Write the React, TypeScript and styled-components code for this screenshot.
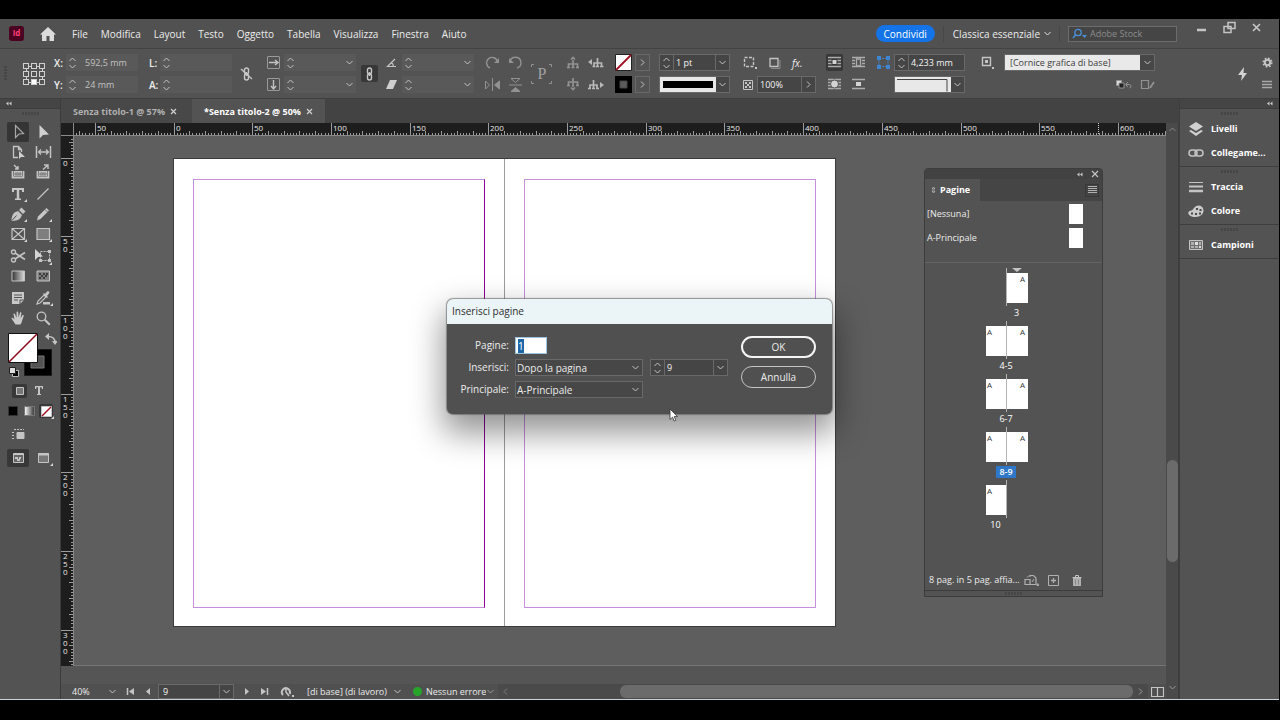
import React, { useEffect, useLayoutEffect, useRef, useState } from "react";
import styled, { createGlobalStyle, css } from "styled-components";

const Global = createGlobalStyle`
  * { box-sizing: border-box; }
  body { margin: 0; background: #000; color: #ececec; font: 10px/12px "Open Sans", "Noto Sans", sans-serif; }
  button, input, select { font: inherit; color: inherit; margin: 0; padding: 0; border: 0; background: none; outline: none; min-width: 0; }
  button { display: flex; align-items: center; justify-content: center; cursor: default; }
  select { appearance: none; }
  svg { display: block; flex: none; }
  h2 { margin: 0; font: inherit; }
`;

/* ---------- drawings ---------- */

const Svg = ({ w = 14, h = 14, children, c = "#c4c4c4" }: { w?: number; h?: number; c?: string; children: React.ReactNode }) => (
  <svg width={w} height={h} viewBox={`0 0 ${w} ${h}`} fill="none" stroke={c} aria-hidden="true">{children}</svg>
);

const Caret = ({ dir = "down", c = "#c4c4c4" }: { dir?: "down" | "up" | "left" | "right"; c?: string }) => {
  const d = { down: "M1.5 3l3 3 3-3", up: "M1.5 6l3-3 3 3", left: "M6 1.5l-3 3 3 3", right: "M3 1.5l3 3-3 3" }[dir];
  return <Svg w={9} h={9} c={c}><path d={d} /></Svg>;
};

const Collapse = () => <Svg w={6} h={5}><path d="M2.500 .5v4L0 2.500zM5.500 .5v4L3 2.500z" fill="#c8c8c8" stroke="none" /></Svg>;

const Corner = ({ x = 15, y = 13 }) => <path d={`M${x} ${y - 3}v3h-3z`} fill="#d8d8d8" stroke="none" />;

const toolIcons: [string, React.ReactNode][][] = [
  [
    ["Selezione", <path d="M5.500 1.500v12l3.500-3.500 4.500-.5z" stroke="#a8a8a8" strokeWidth="1.200" />],
    ["Selezione diretta", <path d="M4.500 1v13.500L8 11l6-.5z" fill="#d0d0d0" stroke="none" />],
    ["Pagina", <><path d="M8 13.500H3.500v-11h5l3 3V8M8.500 2.500v3h3" strokeWidth="1.300" /><path d="M9 7v8l2-2h4z" fill="#d0d0d0" stroke="none" /></>],
    ["Spazio", <><path d="M1.500 2v12M15.500 2v12" strokeWidth="1.500" /><path d="M4 8h9M6 5.500L3.500 8 6 10.500M11 5.500L13.500 8 11 10.500" strokeWidth="1.300" /></>],
    ["Raccolta contenuti", <><path d="M2.500 7v6.500h11V7" strokeWidth="1.800" /><path d="M4 7h8v5H4z" fill="#c4c4c4" stroke="none" /><path d="M6 8v4M8 8v4M10 8v4M4 10h8" stroke="#535353" strokeWidth=".6" /><path d="M4 1l3.500 3.500M8 2v3H5" strokeWidth="1.400" /></>],
    ["Posizionamento contenuti", <><path d="M2.500 7v6.500h11V7" strokeWidth="1.800" /><path d="M4 7h8v5H4z" fill="#c4c4c4" stroke="none" /><path d="M6 8v4M8 8v4M10 8v4M4 10h8" stroke="#535353" strokeWidth=".6" /><path d="M8 5.500l4.500-4M9 1h4v4" strokeWidth="1.400" /></>],
  ],
  [
    ["Testo", <><path d="M2 2h12v4h-2V4H9.200v8.500H11V14H5v-1.500h1.800V4H4v2H2z" fill="#c8c8c8" stroke="none" /><Corner x={17} y={16} /></>],
    ["Linea", <path d="M2.500 13.500l11-11" strokeWidth="1.300" />],
    ["Penna", <><path d="M1.500 15c0-4 1-7 3-8.500L8 5l4 4-1.500 3C9 14 6 15 1.500 15zM9 4l2.500-2.500 4 4L13 8z" fill="#c4c4c4" stroke="none" /><path d="M2 14.500l4.500-5" stroke="#535353" /><Corner x={17} y={16} /></>],
    ["Matita", <><path d="M2 14.500l1-4L11.500 2 14 4.500 5.500 13z" fill="#c8c8c8" stroke="none" /><path d="M10 3.500L12.500 6" stroke="#535353" strokeWidth=".8" /><Corner x={17} y={16} /></>],
    ["Cornice rettangolare", <><path d="M2 2.500h12.500v11H2zM2 2.500l12.500 11M14.500 2.500L2 13.500" strokeWidth="1.200" /><Corner x={17} y={16} /></>],
    ["Rettangolo", <><path d="M2 2.500h12.500v11H2z" fill="#7e7e7e" strokeWidth="1.200" /><Corner x={17} y={16} /></>],
  ],
  [
    ["Forbici", <><circle cx="3.500" cy="4" r="2" strokeWidth="1.400" /><circle cx="3.500" cy="12" r="2" strokeWidth="1.400" /><path d="M5 5l10 6.500M5 11l10-6.500" strokeWidth="1.700" /></>],
    ["Trasformazione libera", <><path d="M5.500 3.500h9v9h-9z" strokeDasharray="2 1" /><path d="M13 2h3v3h-3zM13 11h3v3h-3zM4 11h3v3H4z" fill="#c4c4c4" stroke="none" /><path d="M0 1v11l3-3 5-.500z" fill="#d4d4d4" stroke="none" /><Corner x={17} y={17} /></>],
    ["Sfumatura", <><defs><linearGradient id="gt"><stop stopColor="#333" /><stop offset="1" stopColor="#ddd" /></linearGradient></defs><path d="M2 3h12.500v10H2z" fill="url(#gt)" /></>],
    ["Sfumatura con trasparenza", <><path d="M2 3h12.500v10H2z" fill="#808080" /><path d="M4 5h2v2H4zM8 5h2v2H8zM11 5h2v2h-2zM6 7h2v2H6zM10 7h2v2h-2zM4 9h2v2H4zM8 9h2v2H8z" fill="#3c3c3c" stroke="none" /></>],
  ],
  [
    ["Nota", <><path d="M2 2h12v8l-4 4H2z" fill="#c8c8c8" stroke="none" /><path d="M4 5h8M4 7.500h8M4 10h4" stroke="#535353" /><path d="M10 14v-4h4" stroke="#535353" /></>],
    ["Contagocce", <><path d="M2 14l1-3 6-6 2 2-6 6z" strokeWidth="1.200" /><path d="M8 4l1-1 1 1 2-2.500c2-1 3 .5 2 2L12 6l1 1-1 1z" fill="#c8c8c8" stroke="none" /><path d="M8 12h7v2.500H8z" fill="#c4c4c4" stroke="none" /><Corner x={18} y={16} /></>],
    ["Mano", <path d="M5.500 14.500C4 12 2.500 10 1.500 8.200c.8-.8 1.500-.4 3 1.200L3.500 4c.8-.8 1.400-.4 1.700.4L6.500 8 6.600 2c.8-.8 1.500-.4 1.600.4L8.600 7.600 10 2.500c1-.5 1.500 0 1.400.9l-.8 4.800 2-3.200c1-.3 1.400.2 1.100 1L12 11c-.5 2-1 2.500-1.500 3.500z" fill="#cacaca" stroke="none" />],
    ["Zoom", <><circle cx="6.500" cy="6.500" r="4.300" strokeWidth="1.300" /><path d="M9.800 9.800l5 5" strokeWidth="2" /></>],
  ],
];

const Grip = styled.i<{ $vertical?: boolean }>`
  display: block;
  width: ${(p) => (p.$vertical ? 3 : 17)}px;
  height: ${(p) => (p.$vertical ? 15 : 3)}px;
  margin: ${(p) => (p.$vertical ? "0" : "0 auto")};
  background: repeating-linear-gradient(${(p) => (p.$vertical ? "180deg" : "90deg")}, #464646 0 2px, transparent 2px 3px);
`;

/* ---------- window ---------- */

const Window = styled.div`
  min-height: 100vh;
  border: solid #000;
  border-width: 19px 1px 20px 0;
  display: flex;
  flex-direction: column;
  background: #535353;
`;

const MenuBar = styled.header`
  display: flex;
  align-items: center;
  height: 30px;
  padding: 0 16px 0 9px;
  border-bottom: 1px solid #434343;
  background: #515151;
`;

const Logo = styled.span`
  width: 15px;
  height: 15px;
  border-radius: 3px;
  background: #4a0220;
  color: #ff3f78;
  font-weight: 700;
  font-size: 8px;
  line-height: 14px;
  text-align: center;
`;

const HomeButton = styled.button` margin: 0 16px; `;

const Menus = styled.nav`
  display: flex;
  gap: 13px;
  margin-right: auto;
`;

const MenuItem = styled.button`
  line-height: 16px;
  white-space: nowrap;
`;

const Share = styled.button`
  height: 17px;
  padding: 0 8px;
  border-radius: 9px;
  background: #1473e6;
  color: #fff;
`;

const Workspace = styled.button`
  gap: 3px;
  height: 16px;
  margin-left: 8px;
  padding: 0 7px 0 9px;
  border: solid #474747;
  border-width: 0 1px;
  white-space: nowrap;
`;

const Search = styled.label`
  display: flex;
  align-items: center;
  gap: 3px;
  width: 109px;
  height: 16px;
  margin-left: 8px;
  padding-left: 3px;
  border: 1px solid #6c6c6c;
  background: #454545;
  input { width: 80px; font-size: 9px; }
  input::placeholder { color: #8c8c8c; opacity: 1; }
`;

const WindowButtons = styled.div`
  display: flex;
  align-self: flex-start;
  gap: 13px;
  margin: 2px 0 0 18px;
  button { width: 14px; height: 14px; }
`;

/* ---------- control bar ---------- */

const ControlBar = styled.section`
  display: flex;
  align-items: center;
  height: 50px;
  padding-left: 4px;
  border-bottom: 1px solid #3e3e3e;
`;

const Cell = styled.div<{ $w: number; $start?: boolean }>`
  flex: none;
  width: ${(p) => p.$w}px;
  display: flex;
  flex-direction: column;
  align-items: ${(p) => (p.$start ? "flex-start" : "stretch")};
  gap: 5px;
`;

const Line = styled.div<{ $gap?: number }>`
  display: flex;
  align-items: center;
  gap: ${(p) => p.$gap ?? 0}px;
  height: 17px;
  label { font-weight: 600; }
`;

const Spacer = styled.div` flex: 1; `;

const Field = styled.div<{ $w: number; $live?: boolean }>`
  display: flex;
  width: ${(p) => p.$w}px;
  height: 17px;
  background: #595959;
  color: #c2c2c2;
  input { flex: 1; padding-left: 6px; font-size: 9px; width: 0; }
  ${(p) => p.$live && css`
    background: #454545;
    border: 1px solid #696969;
    color: #f4f4f4;
    div + input, input + button { border-left: 1px solid #696969; }
    input { padding-left: 2px; }
  `}
`;

const Steps = styled.div`
  display: flex;
  flex-direction: column;
  justify-content: center;
  width: 13px;
  flex: none;
  button { height: 7px; overflow: hidden; }
`;

const SideButton = styled.button` flex: none; width: 14px; `;

const Stepper = ({ name }: { name: string }) => (
  <Steps>
    <button type="button" aria-label={`Aumenta ${name}`}><Caret dir="up" /></button>
    <button type="button" aria-label={`Riduci ${name}`}><Caret /></button>
  </Steps>
);

const NumberField = ({ id, name, value = "", w = 72, live, drop }: { id: string; name: string; value?: string; w?: number; live?: boolean; drop?: boolean }) => (
  <Field $w={w} $live={live}>
    <Stepper name={name} />
    <input id={id} aria-label={name} defaultValue={value} />
    {drop && <SideButton type="button" aria-label={`Elenco ${name}`}><Caret /></SideButton>}
  </Field>
);

const Tile = styled.button<{ $on?: boolean }>`
  width: 17px;
  height: 17px;
  border-radius: 2px;
  background: ${(p) => (p.$on ? "#383838" : "none")};
`;

const Bare = styled.button` height: 17px; `;

const ArrowBox = styled.button`
  width: 15px;
  height: 17px;
  border: 1px solid #696969;
`;

const SelectBox = styled.div<{ $w: number; $light?: boolean }>`
  position: relative;
  display: flex;
  width: ${(p) => p.$w}px;
  height: 17px;
  border: 1px solid #696969;
  background: #474747;
  select {
    flex: 1;
    padding: 0 16px 0 ${(p) => (p.$light ? 5 : 1)}px;
    ${(p) => p.$light && css`
      background: linear-gradient(#e9e9e9 0 0) 0 0 / calc(100% - 14px) 100% no-repeat;
      color: #3c3c3c;
      font-size: 9px;
    `}
  }
  svg { position: absolute; right: 2px; top: 3px; pointer-events: none; }
`;

const Dropdown = ({ id, name, value, w, light }: { id: string; name: string; value: string; w: number; light?: boolean }) => (
  <SelectBox $w={w} $light={light}>
    <select id={id} aria-label={name}><option>{value}</option></select>
    <Caret />
  </SelectBox>
);

const Preview = styled.div<{ $w: number }>`
  display: flex;
  width: ${(p) => p.$w}px;
  height: 17px;
  border: 1px solid #696969;
  background: #e8e8e8;
  svg { flex: none; }
  button { flex: 1; background: #474747; }
`;

const dim = "#929292";

const WrapIcon = ({ kind }: { kind: number }) => (
  <Svg w={13} h={13} c="#acacac">
    <path d={["M0 1.500h13M0 4.500h13M0 7.500h13M0 10.500h13", "M0 1.500h13M0 4.500h3M10 4.500h3M0 7.500h3M10 7.500h3M0 10.500h13", "M0 1.500h13M0 4.500h13M0 7.500h13M0 10.500h13", "M0 1.500h13M0 10.500h13"][kind]} strokeWidth="1.300" />
    {kind === 0 && <path d="M4 3.500h5v5H4z" fill="#d4d4d4" stroke="#383838" />}
    {kind === 1 && <path d="M4.500 3h4v7h-4z" strokeWidth="1.300" />}
    {kind === 2 && <circle cx="6.500" cy="6" r="4" fill="#d4d4d4" stroke="#535353" />}
    {kind === 3 && <path d="M4 4h5v4H4z" fill="#d4d4d4" stroke="none" />}
  </Svg>
);

const TreeIcon = ({ kind }: { kind: number }) => (
  <Svg w={16} h={13} c={kind % 2 ? "#b8b8b8" : dim}>
    {kind === 0 && <path d="M7 4v7M2.500 11V8h9v3M1 11.500h3M5.500 11.500h3M10 11.500h3M5 3.500l2-2 2 2" strokeWidth="1.700" />}
    {kind === 1 && <><path d="M9.500 2v9M6 10V7h7.500v3M4.500 10.500h3M8 10.500h3M12 10.500h3.500" strokeWidth="1.700" /><path d="M0 6l4-3v6z" fill="#b8b8b8" stroke="none" /></>}
    {kind === 2 && <path d="M7 0v9M2.500 7V4h9v3M1 7.500h3M10 7.500h3M5 9.500l2 2 2-2" strokeWidth="1.700" />}
    {kind === 3 && <><path d="M5.500 2v9M2 10V7h7v3M0 10.500h3M4 10.500h3M8 10.500h3" strokeWidth="1.700" /><path d="M16 7l-4-3v6z" fill="#b8b8b8" stroke="none" /></>}
  </Svg>
);

const ChainLink = ({ broken }: { broken?: boolean }) => (
  <Svg w={13} h={14} c="#c8c8c8">
    <rect x="4.500" y="1" width="4" height="6" rx="2" strokeWidth="1.400" />
    <rect x="4.500" y="7" width="4" height="6" rx="2" strokeWidth="1.400" />
    <path d="M6.500 5v4" strokeWidth="1.400" />
    {broken && <path d="M1 2l11 10" strokeWidth="1.300" />}
  </Svg>
);

function Controls() {
  return (
    <ControlBar aria-label="Controllo">
      <Cell $w={19}><Grip $vertical /></Cell>
      <Cell $w={31}>
        <Svg w={22} h={22} c="#d0d0d0">
          {[0, 8, 16].flatMap((y) => [0, 8, 16].map((x) => (
            <rect key={`${x}-${y}`} x={x + 0.5} y={y + 0.5} width="5" height="5" fill={x === 8 && y === 16 ? "#fff" : "none"} />
          )))}
          <path d="M6 3.500h2M14 3.500h2M6 19.500h2M14 19.500h2M3.500 6v2M3.500 14v2M19.500 6v2M19.500 14v2" />
        </Svg>
      </Cell>
      <Cell $w={12}><Line><label htmlFor="x">X:</label></Line><Line><label htmlFor="y">Y:</label></Line></Cell>
      <Cell $w={83}><NumberField id="x" name="X" value="592,5 mm" /><NumberField id="y" name="Y" value="24 mm" /></Cell>
      <Cell $w={11}><Line><label htmlFor="l">L:</label></Line><Line><label htmlFor="a">A:</label></Line></Cell>
      <Cell $w={80}><NumberField id="l" name="L" /><NumberField id="a" name="A" /></Cell>
      <Cell $w={27}><Line><Bare aria-label="Vincola proporzioni"><ChainLink broken /></Bare></Line></Cell>
      <Cell $w={17}>
        <Line><Svg w={13} h={13}><path d="M.5 1v11M12.500 1v11M.5.5h12M.5 12.500h12" stroke="#9a9a9a" /><path d="M2 6.500h8M8 4l3 2.500L8 9" strokeWidth="1.400" /></Svg></Line>
        <Line><Svg w={13} h={13}><path d="M.5 1v11M12.500 1v11M.5.5h12M.5 12.500h12" stroke="#9a9a9a" /><path d="M6.500 2v8M4 8l2.500 3L9 8" strokeWidth="1.400" /></Svg></Line>
      </Cell>
      <Cell $w={77}><NumberField id="sx" name="Scala X" drop /><NumberField id="sy" name="Scala Y" drop /></Cell>
      <Cell $w={25}><Line><Tile $on aria-label="Vincola scala"><ChainLink /></Tile></Line></Cell>
      <Cell $w={16}>
        <Line><Svg w={11} h={11}><path d="M9 2L1.500 9.500H10M5 5.500c2 1 2.500 2 2.500 4" strokeWidth="1.200" /></Svg></Line>
        <Line><Svg w={11} h={11}><path d="M4 1h7L7 10H0z" fill="#cfcfcf" stroke="none" /></Svg></Line>
      </Cell>
      <Cell $w={83}><NumberField id="rot" name="Rotazione" drop /><NumberField id="incl" name="Inclinazione" drop /></Cell>
      <Cell $w={23}>
        <Line><Bare aria-label="Ruota in senso orario"><Svg w={15} h={14} c={dim}><path d="M5 12A5.500 5.500 0 1 1 12.500 6" strokeWidth="1.400" /><path d="M14 2v5H9z" fill={dim} stroke="none" /></Svg></Bare></Line>
        <Line><Bare aria-label="Rifletti orizzontalmente"><Svg w={15} h={13} c={dim}><path d="M.5 3v8l4-4zM7.500 0v13" /><path d="M14.500 3v8l-5-4z" fill={dim} /></Svg></Bare></Line>
      </Cell>
      <Cell $w={23}>
        <Line><Bare aria-label="Ruota in senso antiorario"><Svg w={15} h={14} c={dim}><path d="M9 12A5.500 5.500 0 1 0 2 6" strokeWidth="1.400" /><path d="M1 2v5h5z" fill={dim} stroke="none" /></Svg></Bare></Line>
        <Line><Bare aria-label="Rifletti verticalmente"><Svg w={15} h={14} c={dim}><path d="M3 .5h9l-4.500 4zM1 7h13" /><path d="M3 13.500h9l-4.500-4z" fill={dim} /></Svg></Bare></Line>
      </Cell>
      <Cell $w={35}>
        <Svg w={22} h={22} c={dim}>
          <path d="M.5 4V1.500H3M18 1.500h2.500V4M.5 18v2.500H3M18 20.500h2.500V18" />
          <text x="11" y="16" textAnchor="middle" fill="#a2a2a2" stroke="none" fontSize="16" fontFamily="Liberation Serif, serif">P</text>
        </Svg>
      </Cell>
      <Cell $w={22}><Line><TreeIcon kind={0} /></Line><Line><TreeIcon kind={2} /></Line></Cell>
      <Cell $w={27}><Line><TreeIcon kind={1} /></Line><Line><TreeIcon kind={3} /></Line></Cell>
      <Cell $w={20}>
        <Line><Bare aria-label="Riempimento"><Svg w={17} h={17}><path d="M.5.5h16v16H.5z" fill="#fff" stroke="#222" /><path d="M1 16L16 1" stroke="#a01020" strokeWidth="1.800" /></Svg></Bare></Line>
        <Line><Bare aria-label="Traccia"><Svg w={17} h={17}><path d="M0 0h17v17H0z" fill="#000" stroke="none" /><path d="M5 5h7v7H5z" fill="#5c5c5c" stroke="#444" /></Svg></Bare></Line>
      </Cell>
      <Cell $w={24}>
        <ArrowBox aria-label="Opzioni riempimento"><Caret dir="right" /></ArrowBox>
        <ArrowBox aria-label="Opzioni traccia"><Caret dir="right" /></ArrowBox>
      </Cell>
      <Cell $w={84}>
        <NumberField id="weight" name="Spessore" value="1 pt" w={71} live drop />
        <Preview $w={71}>
          <Svg w={56} h={15}><path d="M3 4h50v7H3z" fill="#000" stroke="none" /></Svg>
          <button aria-label="Tipo di traccia"><Caret /></button>
        </Preview>
      </Cell>
      <Cell $w={83}>
        <Line $gap={11}>
          <Bare aria-label="Angoli"><Svg><path d="M1.500 1.500h9v9h-9z" strokeDasharray="3 1.500" strokeWidth="1.400" /><path d="M12 11h2v2h-2z" fill="#c4c4c4" stroke="none" /></Svg></Bare>
          <Bare aria-label="Ombra"><Svg w={13}><path d="M2 2.500h8v8H2z" strokeWidth="1.300" /><path d="M3 12.500h9V4" stroke="#8a8a8a" /></Svg></Bare>
          <Bare aria-label="Effetti"><i>fx.</i></Bare>
        </Line>
        <Line $gap={4}>
          <Svg w={10} h={10}><path d="M.5.5h9v9h-9z" /><path d="M2 2h2v2H2zM6 2h2v2H6zM4 4h2v2H4zM2 6h2v2H2zM6 6h2v2H6z" fill="#c4c4c4" stroke="none" /></Svg>
          <Field $w={59} $live>
            <input aria-label="Opacità" defaultValue="100%" />
            <SideButton aria-label="Regola opacità"><Caret dir="right" /></SideButton>
          </Field>
        </Line>
      </Cell>
      <Cell $w={24}><Tile $on aria-label="Nessun contorno"><WrapIcon kind={0} /></Tile><Tile aria-label="Contorno forma"><WrapIcon kind={2} /></Tile></Cell>
      <Cell $w={27}><Tile aria-label="Contorno riquadro"><WrapIcon kind={1} /></Tile><Tile aria-label="Salta oggetto"><WrapIcon kind={3} /></Tile></Cell>
      <Cell $w={17}>
        <Line><Svg w={13} h={13} c="#3f86d2"><path d="M2 2.500h9v8H2z" strokeDasharray="2 1" /><path d="M0 0h4v4H0zM9 0h4v4H9zM0 9h4v4H0zM9 9h4v4H9z" fill="#3f86d2" stroke="none" /></Svg></Line>
        <Line />
      </Cell>
      <Cell $w={87}>
        <NumberField id="corner" name="Dimensione angolo" value="4,233 mm" w={71} live />
        <Preview $w={71}>
          <Svg w={56} h={15} c="#444"><path d="M2 2.500h50v12" /></Svg>
          <button aria-label="Forma angolo"><Caret /></button>
        </Preview>
      </Cell>
      <Cell $w={23}><Line><Svg w={13} h={13}><path d="M1.500 1.500h8v8h-8z" strokeWidth="1.400" /><path d="M4 4h3v3H4zM11 11h2v2h-2z" fill="#c4c4c4" stroke="none" /></Svg></Line><Line /></Cell>
      <Cell $w={151}>
        <Dropdown id="style" name="Stile oggetto" value="[Cornice grafica di base]" w={151} light />
        <Line $gap={8}>
          <Spacer />
          <Bare aria-label="Cancella modifiche"><Svg w={17} h={12} c={dim}><path d="M1.500 1.500h5v5h-5z" fill="#ddd" /><path d="M4 4h5v5H4z" fill="#222" /><path d="M11 5.500h3.500c2 0 2 3.500 0 3.500M13 3l-2.500 2.500L13 8" /></Svg></Bare>
          <Bare aria-label="Stile rapido"><Svg w={15} h={12} c={dim}><path d="M1.500 1.500h7v8h-7z" strokeWidth="1.200" /><path d="M10 9l4-6" strokeWidth="1.800" /></Svg></Bare>
        </Line>
      </Cell>
      <Spacer />
      <Cell $w={24}><Line><Bare aria-label="Azioni rapide"><Svg w={10} h={14}><path d="M6 0L0 8h4l-1 6 6-8H5.500z" fill="#d4d4d4" stroke="none" /></Svg></Bare></Line></Cell>
      <Cell $w={17} $start>
        <Bare aria-label="Personalizza"><Svg w={11} h={11}><circle cx="5.500" cy="5.500" r="2.700" strokeWidth="2" /><circle cx="5.500" cy="5.500" r="4.300" strokeDasharray="1.700 1.677" strokeWidth="1.600" /></Svg></Bare>
        <Bare aria-label="Menu"><Svg w={10} h={9} c="#a8a8a8"><path d="M0 1.500h10M0 4.500h10M0 7.500h10" strokeWidth="1.400" /></Svg></Bare>
      </Cell>
    </ControlBar>
  );
}

/* ---------- tool bar ---------- */

const Main = styled.main`
  flex: 1;
  display: grid;
  grid-template-columns: 61px minmax(0, 1fr) 100px;
  border-bottom: 1px solid #c9d2d6;
`;

const Tools = styled.aside`
  display: flex;
  flex-direction: column;
  border-right: 1px solid #3c3c3c;
`;

const DockHead = styled.div<{ $right?: boolean }>`
  display: flex;
  align-items: center;
  justify-content: ${(p) => (p.$right ? "flex-end" : "flex-start")};
  height: 10px;
  padding: 0 6px;
  background: #454545;
  border-bottom: 1px solid #3e3e3e;
  margin-bottom: ${(p) => (p.$right ? 0 : 3)}px;
`;

const ToolGroup = styled.div`
  display: grid;
  grid-template-columns: 22px 22px;
  column-gap: 3px;
  margin: 0 0 2px 7px;
`;

const Tool = styled.button<{ $on?: boolean }>`
  height: 20px;
  border-radius: 2px;
  background: ${(p) => (p.$on ? "#353535" : "none")};
  svg { overflow: visible; }
`;

const ToolsTop = styled.div` padding-bottom: 7px; `;

const Swatches = styled.button` margin: 2px 0 0 7px; align-self: flex-start; `;

const ModeRow = styled.div<{ $h: number; $gap: number }>`
  display: flex;
  align-items: center;
  gap: ${(p) => p.$gap}px;
  height: ${(p) => p.$h}px;
  padding-left: 7px;
`;

const ModeButton = styled.button<{ $w: number; $on?: boolean }>`
  width: ${(p) => p.$w}px;
  height: ${(p) => (p.$w === 22 ? 18 : 14)}px;
  border-radius: 2px;
  background: ${(p) => (p.$on ? "#383838" : "none")};
  svg { overflow: visible; }
`;

function ToolBar() {
  return (
    <Tools aria-label="Strumenti">
      <DockHead><Collapse /></DockHead>
      <ToolsTop><Grip /></ToolsTop>
      {toolIcons.map((group, g) => (
        <ToolGroup key={g}>
          {group.map(([name, art], i) => (
            <Tool key={name} $on={g === 0 && i === 0} aria-label={name}><Svg w={16} h={16}>{art}</Svg></Tool>
          ))}
        </ToolGroup>
      ))}
      <Swatches aria-label="Riempimento e traccia">
        <Svg w={50} h={46}>
          <path d="M17.500 17.500h27v26h-27z" fill="#000" stroke="#1a1a1a" />
          <path d="M24 24h13v12H24z" fill="#535353" stroke="#777" />
          <path d="M1.500 1.500h29v29h-29z" fill="#fff" stroke="#111" />
          <path d="M2 30L30 2" stroke="#8e0d20" strokeWidth="1.600" />
          <path d="M41 4.500c5 0 7 2 7 6" strokeWidth="1.400" />
          <path d="M42 1v7l-4-3.500zM45 9h6l-3 4z" fill="#c4c4c4" stroke="none" />
          <path d="M5.500 38.500h6v6h-6z" fill="#000" stroke="#bbb" />
          <path d="M2.500 35.500h6v6h-6z" fill="#ddd" stroke="#222" />
        </Svg>
      </Swatches>
      <ModeRow $h={25} $gap={5}>
        <i />
        <ModeButton $w={15} $on aria-label="Formattazione contenitore"><Svg w={8} h={8}><path d="M.5.5h7v7h-7z" fill="#777" /></Svg></ModeButton>
        <ModeButton $w={14} aria-label="Formattazione testo"><Svg w={8} h={9}><path d="M0 0h8v3H7L6.500 1.200H5V8h1v1H2V8h1V1.200H1.500L1 3H0z" fill="#c4c4c4" stroke="none" /></Svg></ModeButton>
      </ModeRow>
      <ModeRow $h={16} $gap={4}>
        <ModeButton $w={12} aria-label="Colore"><Svg w={11} h={10}><path d="M.5.5h9v9h-9z" fill="#000" stroke="#333" /></Svg></ModeButton>
        <ModeButton $w={12} aria-label="Sfumatura"><Svg w={11} h={10}><defs><linearGradient id="gm"><stop stopColor="#fff" /><stop offset="1" stopColor="#333" /></linearGradient></defs><path d="M.5.5h10v9H.5z" fill="url(#gm)" stroke="#777" /></Svg></ModeButton>
        <ModeButton $w={14} $on aria-label="Nessuno"><Svg w={11} h={11}><path d="M.5.5h10v10H.5z" fill="#fff" /><path d="M1 10l9-9" stroke="#a01020" strokeWidth="1.500" /><Corner x={13} y={13} /></Svg></ModeButton>
      </ModeRow>
      <ModeRow $h={30} $gap={3}>
        <ModeButton $w={22} aria-label="Modalità normale"><Svg w={13} h={12}><path d="M5 4.500h7v6H5z" fill="#c4c4c4" /><path d="M0 4.500h3M0 7.500h3M0 10.500h3" strokeDasharray="2 1" /><path d="M2 1.500h10" strokeDasharray="2 1" /></Svg></ModeButton>
      </ModeRow>
      <ModeRow $h={18} $gap={3}>
        <ModeButton $w={22} $on aria-label="Vista"><Svg w={11} h={10}><path d="M.5.5h10v9H.5zM0 1.500h11" fill="#666" /><path d="M2 4h3v2H2zM6 4h2v2H6zM4 6h3v2H4z" fill="#c4c4c4" stroke="none" /></Svg></ModeButton>
        <ModeButton $w={22} aria-label="Modalità schermo"><Svg w={11} h={10}><path d="M.5.5h10v9H.5z" fill="#777" /><path d="M0 1.500h11" strokeWidth="2" /><Corner x={15} y={13} /></Svg></ModeButton>
      </ModeRow>
    </Tools>
  );
}

/* ---------- document area ---------- */

const Center = styled.section`
  display: flex;
  flex-direction: column;
`;

const Tabs = styled.div`
  display: flex;
  height: 24px;
  background: #434343;
`;

const Tab = styled.div<{ $on?: boolean }>`
  display: flex;
  align-items: center;
  gap: 5px;
  width: ${(p) => (p.$on ? 133 : 131)}px;
  padding: 1px 0 0 12px;
  background: ${(p) => (p.$on ? "#535353" : "#484848")};
  color: ${(p) => (p.$on ? "#fff" : "#b0b0b0")};
  font-weight: 700;
  font-size: 9px;
  white-space: nowrap;
`;

const Body = styled.div`
  flex: 1;
  display: grid;
  grid-template: 13px minmax(0, 1fr) 18px 15px / 13px minmax(0, 1fr) 13px;
`;

const RulerBox = styled.div<{ $side?: boolean }>`
  overflow: hidden;
  background: #1d1d1d;
  border: solid #8a8a8a;
  border-width: ${(p) => (p.$side ? "0 1px 0 0" : "0 0 1px 0")};
  contain: size;
`;

const UNIT = 1.574;

const Ruler = ({ side, origin }: { side?: boolean; origin: number }) => {
  const box = useRef<HTMLDivElement>(null);
  const [length, setLength] = useState(0);
  useLayoutEffect(() => {
    const el = box.current!;
    const measure = () => setLength(side ? el.clientHeight : el.clientWidth);
    measure();
    const watch = new ResizeObserver(measure);
    watch.observe(el);
    return () => watch.disconnect();
  }, [side]);

  const ticks: string[] = [];
  const labels: { at: number; text: string }[] = [];
  const first = -Math.floor(origin / UNIT / 2) * 2;
  for (let mm = first; origin + mm * UNIT < length; mm += 2) {
    const at = Math.floor(origin + mm * UNIT);
    const len = mm % 50 === 0 ? 12 : mm % 10 === 0 ? 4 : 2;
    ticks.push(side ? `M${12 - len} ${at + 0.5}h${len}` : `M${at + 0.5} ${12 - len}v${len}`);
    if (mm % 50 === 0 && at + 16 < length) labels.push({ at, text: String(Math.abs(mm)) });
  }
  return (
    <RulerBox $side={side} ref={box}>
      <svg width={side ? 12 : length} height={side ? length : 12} fill="#e8e8e8" fontSize="8">
        <path d={ticks.join("")} stroke="#9c9c9c" />
        {labels.map((l) => (
          <text key={l.at} x={side ? 2 : l.at + 2} y={side ? l.at + 8 : 8}>
            {side ? l.text.split("").map((ch, i) => <tspan key={i} x="2" y={l.at + 8 + i * 8}>{ch}</tspan>) : l.text}
          </text>
        ))}
        {!side && <path d="M1024.500 0v12" stroke="#ccc" strokeDasharray="1 1" />}
      </svg>
    </RulerBox>
  );
};

const RulerCorner = styled.div`
  background: #1d1d1d;
  border: solid #8a8a8a;
  border-width: 0 1px 1px 0;
`;

const Pasteboard = styled.div`
  position: relative;
  overflow: hidden;
  background: #5e5e5e;
  border-bottom: 1px solid #757575;
`;

const Spread = styled.div`
  position: absolute;
  left: 100px;
  top: 23px;
  display: flex;
  box-shadow: 0 0 0 1px #3c3c3c, 1px 1px 0 0 #111;
`;

const Sheet = styled.div<{ $first?: boolean }>`
  width: ${(p) => (p.$first ? 331 : 330)}px;
  height: 467px;
  padding: ${(p) => (p.$first ? "20px 19px" : "20px 19px")};
  background: #fff;
  border-right: ${(p) => (p.$first ? "1px solid #9c9c9c" : "0")};
  &::before {
    content: "";
    display: block;
    height: 100%;
    border: 1px solid #c68fdc;
    border-right-color: ${(p) => (p.$first ? "#8c0096" : "#c68fdc")};
  }
`;

const VScroll = styled.div`
  grid-area: 1 / 3 / 5 / 4;
  display: grid;
  grid-template-rows: 12px 325fr 102px 113fr 24px;
  justify-items: center;
  align-items: center;
  background: #4a4a4a;
  border-right: 1px solid #3e3e3e;
  svg:last-child { grid-row: 5; }
`;

const Thumb = styled.div`
  align-self: stretch;
  background: #6b6b6b;
  border-radius: 6px;
`;

const VThumb = styled(Thumb)` grid-row: 3; width: 11px; `;

const Band = styled.div` grid-column: 1 / 3; background: #555; `;

const Status = styled.footer`
  grid-column: 1 / 3;
  display: flex;
  align-items: center;
  background: #505050;
  padding-left: 11px;
  font-size: 9px;
  white-space: nowrap;
`;

const StatusSelect = styled.label<{ $w: number; $gap?: number }>`
  display: flex;
  align-items: center;
  justify-content: space-between;
  width: ${(p) => p.$w}px;
  margin-right: ${(p) => p.$gap ?? 0}px;
  select { flex: 1; height: 15px; }
`;

const NavButton = styled.button` width: 18px; height: 15px; `;

const Preflight = styled(NavButton)` margin: 0 11px 0 5px; `;

const PageField = styled(Field)`
  height: 15px;
  margin: 0 3px 0 1px;
  input { padding-left: 4px; }
`;

const Dot = styled.i`
  flex: none;
  width: 9px;
  height: 9px;
  margin-right: 4px;
  border-radius: 50%;
  background: #27a52a;
`;

const HScroll = styled.div`
  flex: 1;
  display: grid;
  grid-template-columns: 14px 108fr 513fr 15px;
  align-items: center;
  justify-items: center;
  height: 15px;
  background: #4a4a4a;
`;

const HThumb = styled(Thumb)` grid-column: 3; width: 100%; height: 13px; align-self: center; `;

const Split = styled.button` width: 18px; `;

function StatusBar() {
  return (
    <Status>
      <StatusSelect $w={45} $gap={4}><select aria-label="Livello di zoom"><option>40%</option></select><Caret /></StatusSelect>
      <NavButton aria-label="Prima pagina"><Svg w={9} h={9}><path d="M1.500 1v7" strokeWidth="1.500" /><path d="M8 1v7L3 4.500z" fill="#c4c4c4" stroke="none" /></Svg></NavButton>
      <NavButton aria-label="Pagina precedente"><Svg w={9} h={9}><path d="M6 1v7L2 4.500z" fill="#c4c4c4" stroke="none" /></Svg></NavButton>
      <PageField $w={76} $live>
        <input aria-label="Pagina" defaultValue="9" />
        <SideButton aria-label="Elenco pagine"><Caret /></SideButton>
      </PageField>
      <NavButton aria-label="Pagina successiva"><Svg w={9} h={9}><path d="M3 1v7l4-3.500z" fill="#c4c4c4" stroke="none" /></Svg></NavButton>
      <NavButton aria-label="Ultima pagina"><Svg w={9} h={9}><path d="M7.500 1v7" strokeWidth="1.500" /><path d="M1 1v7l5-3.500z" fill="#c4c4c4" stroke="none" /></Svg></NavButton>
      <Preflight aria-label="Verifica preliminare"><Svg w={14} h={11}><path d="M3 9A4 4 0 1 1 9.500 8" strokeWidth="2" /><path d="M6 3v3l3 4" strokeWidth="1.500" /><path d="M12 9h2v2h-2z" fill="#c4c4c4" stroke="none" /></Svg></Preflight>
      <StatusSelect $w={95} $gap={11}><select aria-label="Profilo"><option>[di base] (di lavoro)</option></select><Caret /></StatusSelect>
      <Dot />
      <StatusSelect $w={69} $gap={3}><select aria-label="Errori"><option>Nessun errore</option></select><Caret c="#999" /></StatusSelect>
      <HScroll><Caret dir="left" c="#7c7c7c" /><HThumb /><Caret dir="right" c="#a0a0a0" /></HScroll>
      <Split aria-label="Dividi layout"><Svg w={13} h={10}><path d="M.5.5h12v9H.5zM6.500 0v10" strokeWidth="1.200" /></Svg></Split>
    </Status>
  );
}

/* ---------- pages panel ---------- */

const Panel = styled.section`
  position: absolute;
  right: 63px;
  top: 32px;
  width: 179px;
  border: 1px solid #3c3c3c;
  border-radius: 4px 4px 0 0;
  background: #535353;
  font-size: 9px;
`;

const PanelTop = styled.div`
  display: flex;
  align-items: center;
  justify-content: flex-end;
  gap: 8px;
  height: 10px;
  padding-right: 3px;
  border-radius: 3px 3px 0 0;
  background: #424242;
`;

const PanelTabs = styled.div`
  display: flex;
  align-items: center;
  justify-content: space-between;
  height: 22px;
  padding-right: 3px;
  background: #454545;
`;

const PanelTab = styled.h2`
  && { display: flex; align-items: center; gap: 4px; height: 22px; width: 55px; padding-left: 6px; background: #535353; color: #fff; font-weight: 700; }
`;

const MenuButton = styled.button` width: 14px; height: 13px; border: 1px solid #383838; `;

const Masters = styled.div`
  height: 62px;
  padding: 1px 19px 0 2px;
  border-bottom: 1px solid #656565;
`;

const Master = styled.button`
  width: 100%;
  height: 24px;
  justify-content: space-between;
`;

const MiniPage = styled.i` width: 14px; height: 20px; background: #fff; `;

const Spreads = styled.div`
  display: flex;
  flex-direction: column;
  align-items: center;
  height: 307px;
  padding: 10px 13px 0 0;
`;

const MiniSpread = styled.div`
  position: relative;
  display: grid;
  grid-template: 30px 1fr / 21px 21px;
  height: 53px;
  &::after {
    content: "";
    position: absolute;
    left: 20px;
    top: -5px;
    width: 1px;
    height: 38px;
    background: #b4b4b4;
  }
`;

const Mini = styled.button<{ $right?: boolean }>`
  grid-column: ${(p) => (p.$right ? 2 : 1)};
  grid-row: 1;
  align-items: flex-start;
  justify-content: ${(p) => (p.$right ? "flex-end" : "flex-start")};
  padding: 1px ${(p) => (p.$right ? 3 : 1)}px 0;
  background: #fff;
  color: #333;
  font-size: 8px;
  line-height: 10px;
`;

const MiniLabel = styled.span<{ $col: string; $on?: boolean }>`
  grid-column: ${(p) => p.$col};
  grid-row: 2;
  justify-self: center;
  align-self: start;
  margin: 4px 2px 0 0;
  padding: 0 3px;
  background: ${(p) => (p.$on ? "#2f77c8" : "none")};
  color: #fff;
  font-weight: ${(p) => (p.$on ? 600 : 400)};
`;

const Target = styled.i`
  position: absolute;
  left: 26px;
  top: -5px;
  border: solid transparent;
  border-width: 4px 5px 0;
  border-top-color: #c4c4c4;
`;

const PanelFoot = styled.div`
  display: flex;
  align-items: center;
  height: 20px;
  padding: 0 14px 0 4px;
  white-space: nowrap;
  button:first-of-type { margin-left: auto; }
  button { width: 23px; }
`;

const PanelGrip = styled.div` padding: 1px 0; border-top: 1px solid #3c3c3c; `;

const spreads = [
  { label: "3", left: false, right: true },
  { label: "4-5", left: true, right: true },
  { label: "6-7", left: true, right: true },
  { label: "8-9", left: true, right: true },
  { label: "10", left: true, right: false },
];

function PagesPanel() {
  return (
    <Panel aria-label="Pagine">
      <PanelTop>
        <Collapse />
        <button aria-label="Chiudi pannello"><Svg w={8} h={8}><path d="M1 1l6 6M7 1L1 7" strokeWidth="1.200" /></Svg></button>
      </PanelTop>
      <PanelTabs>
        <PanelTab><Svg w={5} h={8}><path d="M1 3l1.500-2L4 3zM1 5l1.500 2L4 5z" strokeWidth=".7" /></Svg>Pagine</PanelTab>
        <MenuButton aria-label="Menu pannello"><Svg w={9} h={8} c="#b0b0b0"><path d="M0 .5h9M0 2.500h9M0 4.500h9M0 6.500h9" /></Svg></MenuButton>
      </PanelTabs>
      <Masters>
        <Master>[Nessuna]<MiniPage /></Master>
        <Master>A-Principale<MiniPage /></Master>
      </Masters>
      <Spreads>
        {spreads.map((s) => (
          <MiniSpread key={s.label}>
            {s.left && <Mini aria-label={`Pagina sinistra ${s.label}`}>A</Mini>}
            {s.right && <Mini $right aria-label={`Pagina destra ${s.label}`}>A</Mini>}
            {s.label === "3" && <Target />}
            <MiniLabel $col={s.left && s.right ? "1 / 3" : s.left ? "1" : "2"} $on={s.label === "8-9"}>{s.label}</MiniLabel>
          </MiniSpread>
        ))}
      </Spreads>
      <PanelFoot>
        8 pag. in 5 pag. affia...
        <button aria-label="Modifica dimensioni pagina"><Svg w={15} h={12} c="#b0b0b0"><path d="M1 5.500h5v5H1zM6 3V1.500h3.500L12 4v6.500H6" strokeWidth="1.200" /><path d="M3 3.500l2-2M8 8l2-3M13 10h1.500v1.500H13z" /></Svg></button>
        <button aria-label="Nuova pagina"><Svg w={11} h={11} c="#b0b0b0"><path d="M.5.5h10v10H.5z" /><path d="M5.500 3v5M3 5.500h5" strokeWidth="1.300" /></Svg></button>
        <button aria-label="Elimina pagina"><Svg w={10} h={11}><path d="M.5 2.500h9M3.500 2V.5h3V2" /><path d="M1 3h8v8H1z" fill="#b0b0b0" stroke="none" /><path d="M3.500 4.500v5M6.500 4.500v5" stroke="#888" /></Svg></button>
      </PanelFoot>
      <PanelGrip><Grip /></PanelGrip>
    </Panel>
  );
}

/* ---------- insert pages dialog ---------- */

const Dialog = styled.form`
  position: absolute;
  left: 373px;
  top: 163px;
  width: 385px;
  border-radius: 6px;
  overflow: hidden;
  background: #505050;
  box-shadow: 0 0 1px 1px rgba(90, 90, 90, 0.6);
`;

const DialogShade = styled.div`
  position: absolute;
  left: 373px;
  top: 163px;
  width: 385px;
  height: 114px;
  border-radius: 6px;
  box-shadow: 0 16px 32px 4px rgba(0, 0, 0, 0.42);
`;

const DialogTitle = styled.h2`
  && { height: 25px; padding-left: 5px; line-height: 25px; background: #ebf5f7; color: #2c2c2c; }
`;

const DialogBody = styled.div`
  display: flex;
  justify-content: space-between;
  padding: 12px 16px 16px 0;
`;

const FormGrid = styled.div`
  display: grid;
  grid-template-columns: 62px auto;
  align-content: end;
  gap: 5px 6px;
  padding-top: 1px;
  > label { text-align: right; line-height: 17px; white-space: nowrap; }
`;

const PagesInput = styled.input`
  && { width: 32px; height: 17px; padding-left: 2px; background: #fff; color: #222; border: 1px solid #9cc3e0; }
  &::selection { background: #1c66a8; color: #fff; }
`;

const DialogButtons = styled.div`
  display: flex;
  flex-direction: column;
  gap: 8px;
`;

const PillButton = styled.button<{ $main?: boolean }>`
  && { width: 75px; height: 22px; border-radius: 11px; border: ${(p) => (p.$main ? 2 : 1)}px solid ${(p) => (p.$main ? "#f4f4f4" : "#c4c4c4")}; }
`;

const Pointer = styled.div`
  position: absolute;
  left: 595px;
  top: 272px;
`;

function InsertDialog() {
  const pages = useRef<HTMLInputElement>(null);
  useEffect(() => {
    pages.current?.focus();
    pages.current?.select();
  }, []);
  return (
    <>
      <DialogShade />
      <Dialog aria-label="Inserisci pagine" onSubmit={(e) => e.preventDefault()}>
        <DialogTitle>Inserisci pagine</DialogTitle>
        <DialogBody>
          <FormGrid>
            <label htmlFor="pages">Pagine:</label>
            <PagesInput id="pages" ref={pages} defaultValue="1" />
            <label htmlFor="where">Inserisci:</label>
            <Line $gap={7}>
              <Dropdown id="where" name="Inserisci" value="Dopo la pagina" w={128} />
              <NumberField id="after" name="Numero pagina" value="9" w={78} live drop />
            </Line>
            <label htmlFor="master">Principale:</label>
            <Dropdown id="master" name="Principale" value="A-Principale" w={128} />
          </FormGrid>
          <DialogButtons>
            <PillButton $main>OK</PillButton>
            <PillButton type="button">Annulla</PillButton>
          </DialogButtons>
        </DialogBody>
      </Dialog>
    </>
  );
}

/* ---------- right dock ---------- */

const Dock = styled.aside`
  display: flex;
  flex-direction: column;
  border-left: 1px solid #3e3e3e;
`;

const DockGroup = styled.div`
  padding: 3px 0 1px;
  border-bottom: 1px solid #3e3e3e;
`;

const DockItem = styled.button`
  width: 100%;
  height: 24px;
  padding-left: 8px;
  gap: 7px;
  justify-content: flex-start;
  color: #fff;
  font-weight: 700;
  font-size: 9px;
`;

const DockGrip = styled.div` height: 5px; `;

const dockGroups: [string, React.ReactNode][][] = [
  [
    ["Livelli", <><path d="M8 0l7 4.500L8 9 1 4.500z" fill="#d0d0d0" stroke="none" /><path d="M1 9l2-1 5 3 5-3 2 1-7 5z" fill="#d0d0d0" stroke="none" /></>],
    ["Collegame...", <><rect x="1" y="4" width="8" height="6" rx="3" strokeWidth="1.500" /><rect x="7" y="4" width="8" height="6" rx="3" strokeWidth="1.500" /></>],
  ],
  [
    ["Traccia", <><path d="M1 2.500h14" /><path d="M1 6.500h14" strokeWidth="2" /><path d="M1 11h14" strokeWidth="2.500" /></>],
    ["Colore", <><path d="M6 4C9 0 15 1 15.500 6c.3 4-3 7-8 7C3 13 0 11 .3 8.500.5 6.500 4 7.500 6 4z" fill="#cacaca" stroke="none" /><path d="M8 4h2v2H8zM11.500 5h2v2h-2zM3 8.500h2v2H3zM7 9h2v2H7zM11 8.500h2v2h-2z" fill="#484848" stroke="none" /></>],
  ],
  [
    ["Campioni", <><path d="M1.500 2.500h13v9h-13z" fill="#707070" /><path d="M3 4h3v3H3zM11 4h2v3h-2zM3 8h3v2H3zM7 8h3v2H7z" fill="#b0b0b0" stroke="none" /><path d="M7 4h3v3H7zM11 8h2v2h-2z" fill="#e0e0e0" stroke="none" /></>],
  ],
];

export default function App() {
  return (
    <>
      <Global />
      <Window>
        <MenuBar>
          <Logo>Id</Logo>
          <HomeButton aria-label="Home"><Svg w={16} h={14}><path d="M8 0l8 7.500h-2V14h-4.500V9h-3v5H2V7.500H0z" fill="#dcdcdc" stroke="none" /></Svg></HomeButton>
          <Menus>
            {["File", "Modifica", "Layout", "Testo", "Oggetto", "Tabella", "Visualizza", "Finestra", "Aiuto"].map((m) => <MenuItem key={m}>{m}</MenuItem>)}
          </Menus>
          <Share>Condividi</Share>
          <Workspace>Classica essenziale <Caret c="#e4e4e4" /></Workspace>
          <Search>
            <Svg w={15} h={12} c="#4a90d9"><circle cx="6" cy="4.500" r="3.200" strokeWidth="1.300" /><path d="M3.500 7L1 10" strokeWidth="1.500" /><path d="M10 7h5l-2.500 3z" fill="#4a90d9" stroke="none" /></Svg>
            <input aria-label="Cerca" placeholder="Adobe Stock" />
          </Search>
          <WindowButtons>
            <button aria-label="Riduci a icona"><Svg w={10} h={14}><path d="M0 9h9" strokeWidth="2.500" /></Svg></button>
            <button aria-label="Ripristina"><Svg w={13} h={14}><path d="M5 1.500h7v6H5zM1 5.500h7v6H1z" strokeWidth="1.500" /></Svg></button>
            <button aria-label="Chiudi"><Svg w={9} h={14}><path d="M1 3l7 7M8 3l-7 7" strokeWidth="1.700" /></Svg></button>
          </WindowButtons>
        </MenuBar>
        <Controls />
        <Main>
          <ToolBar />
          <Center>
            <Tabs>
              {["Senza titolo-1 @ 57%", "*Senza titolo-2 @ 50%"].map((t, i) => (
                <Tab key={t} $on={i === 1}>
                  {t}
                  <button aria-label={`Chiudi ${t}`}><Svg w={7} h={7} c="#d0d0d0"><path d="M1 1l5 5M6 1L1 6" strokeWidth="1.200" /></Svg></button>
                </Tab>
              ))}
            </Tabs>
            <Body>
              <RulerCorner />
              <Ruler origin={100} />
              <VScroll><Caret dir="up" c="#888" /><VThumb /><Caret c="#999" /></VScroll>
              <Ruler side origin={22} />
              <Pasteboard>
                <Spread><Sheet $first /><Sheet /></Spread>
                <PagesPanel />
                <InsertDialog />
                <Pointer>
                  <svg width="9" height="14" viewBox="0 0 9 14"><path d="M1 1v10.500l2.500-2.300 1.600 3.800 1.700-.7-1.600-3.700h3.300z" fill="#fff" stroke="#333" strokeWidth=".8" /></svg>
                </Pointer>
              </Pasteboard>
              <Band />
              <StatusBar />
            </Body>
          </Center>
          <Dock>
            <DockHead $right><Collapse /></DockHead>
            {dockGroups.map((group, i) => (
              <DockGroup key={i}>
                <DockGrip><Grip /></DockGrip>
                {group.map(([name, art]) => <DockItem key={name}><Svg w={16} h={14}>{art}</Svg>{name}</DockItem>)}
              </DockGroup>
            ))}
          </Dock>
        </Main>
      </Window>
    </>
  );
}
